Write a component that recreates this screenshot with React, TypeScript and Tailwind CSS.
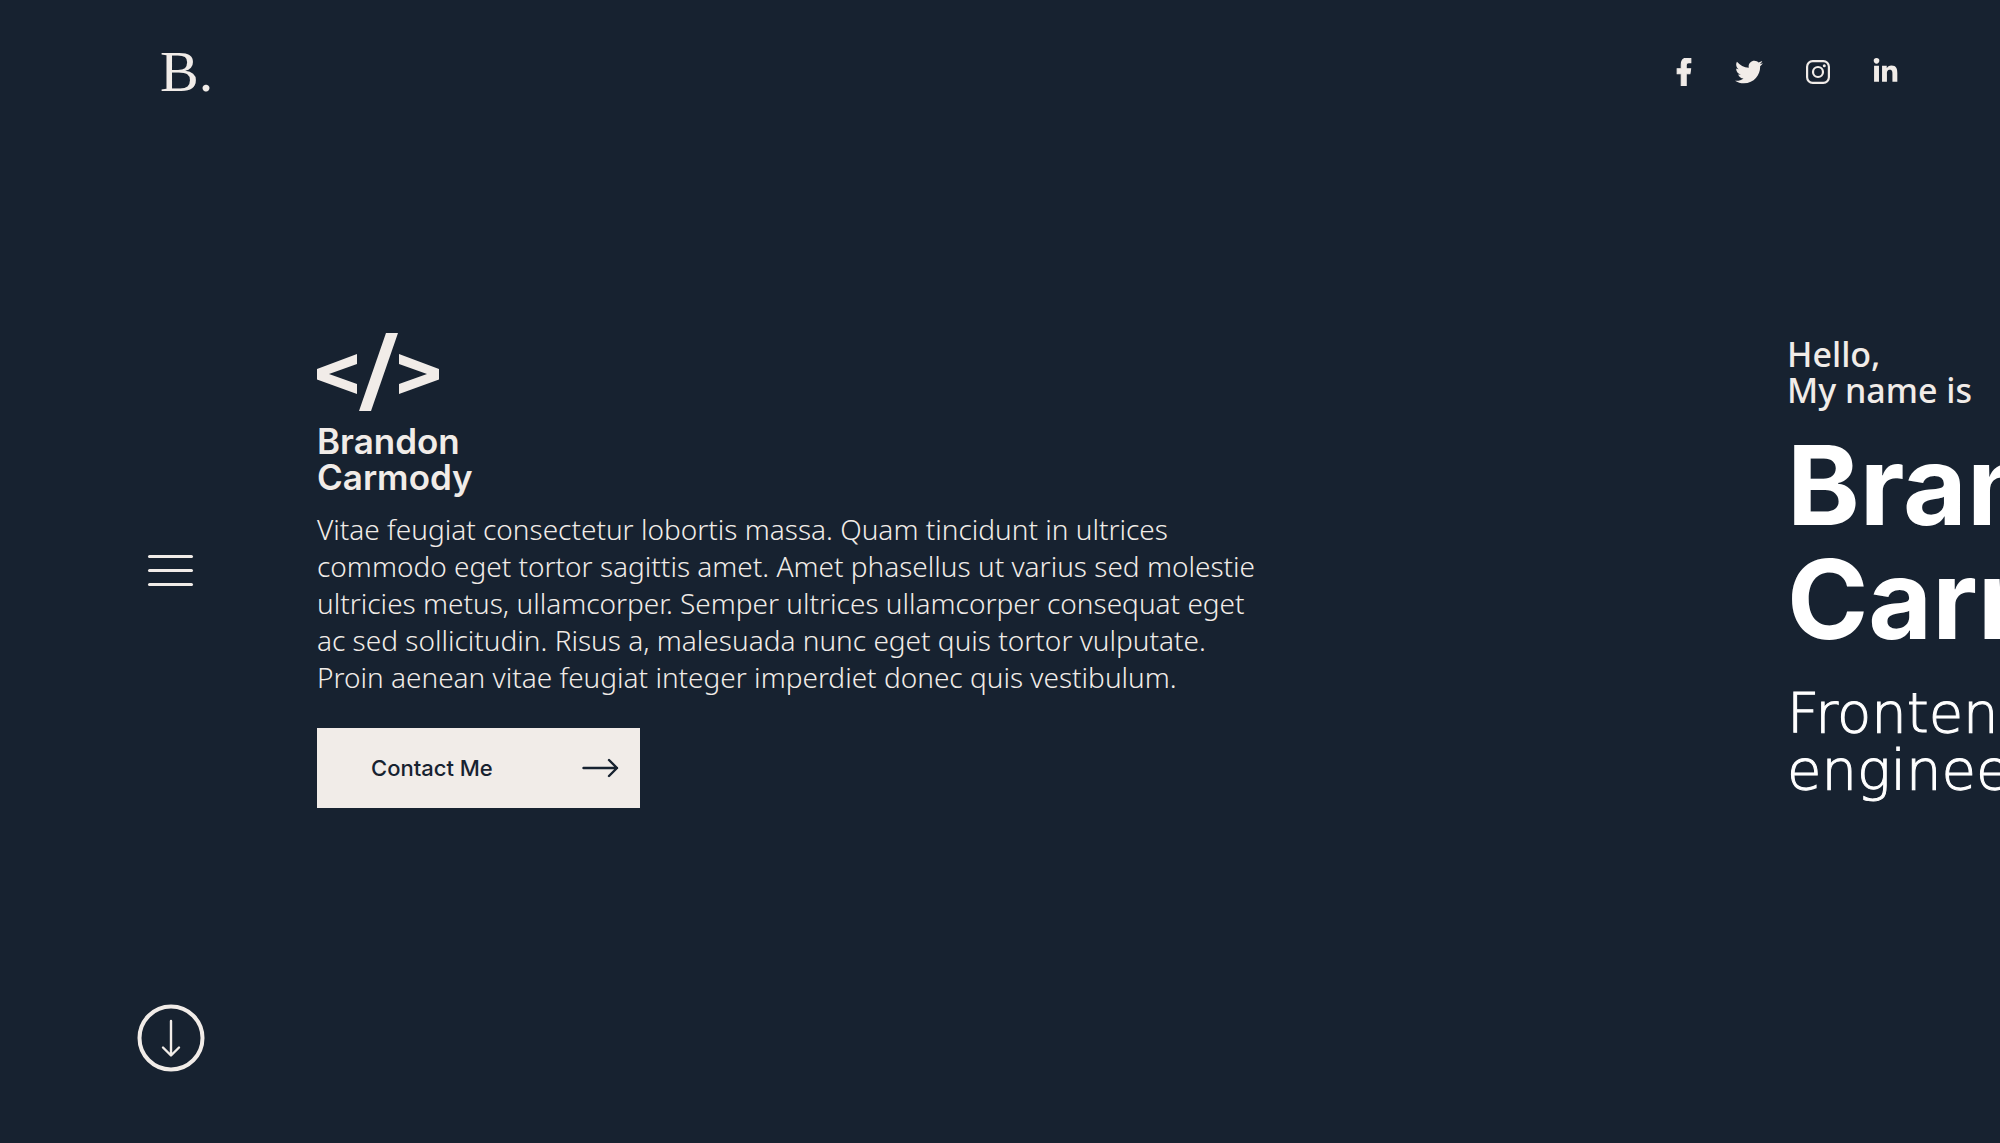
import React from "react";
import { FaFacebookF, FaTwitter, FaLinkedinIn } from "react-icons/fa";

const bio = [
  "Vitae feugiat consectetur lobortis massa. Quam tincidunt in ultrices",
  "commodo eget tortor sagittis amet. Amet phasellus ut varius sed molestie",
  "ultricies metus, ullamcorper. Semper ultrices ullamcorper consequat eget",
  "ac sed sollicitudin. Risus a, malesuada nunc eget quis tortor vulputate.",
  "Proin aenean vitae feugiat integer imperdiet donec quis vestibulum.",
];

function InstagramIcon() {
  return (
    <svg width="24" height="24" viewBox="0 0 24 24" fill="none" stroke="currentColor" strokeWidth="2.2" aria-hidden="true">
      <rect x="1.1" y="1.1" width="21.8" height="21.8" rx="5.6" />
      <circle cx="12" cy="12" r="5" />
      <circle cx="18.3" cy="5.8" r="1.5" fill="currentColor" stroke="none" />
    </svg>
  );
}

function CodeMark() {
  return (
    <svg width="122" height="78" viewBox="0 0 122 78" fill="currentColor" aria-hidden="true">
      <path d="M40 21V31L12 41L40 51V61L0 46.500V36Z" />
      <path d="M69 0H81L54 78H42Z" />
      <path d="M82 21L122 36V46.500L82 61V51L110 41L82 31Z" />
    </svg>
  );
}

function Social() {
  return (
    <nav aria-label="Social" className="flex items-center">
      <a href="#facebook" aria-label="Facebook" className="mr-[43px]"><FaFacebookF className="h-7 w-4" preserveAspectRatio="none" stroke="currentColor" strokeWidth="20" /></a>
      <a href="#twitter" aria-label="Twitter" className="mr-[43px]"><FaTwitter size={28} /></a>
      <a href="#instagram" aria-label="Instagram" className="mr-[42px]"><InstagramIcon /></a>
      <a href="#linkedin" aria-label="LinkedIn"><FaLinkedinIn size={27} /></a>
    </nav>
  );
}

export default function App() {
  return (
    <div className="flex min-h-screen flex-col overflow-hidden bg-[#172230] font-['Inter',sans-serif] text-[#f1ece8]">
      <header className="flex h-[143px] items-center justify-between pr-[101px] pl-40">
        <a href="#home" className="font-['Liberation_Serif',serif] text-[58px] leading-none">B.</a>
        <Social />
      </header>

      <main className="flex flex-1 items-center pb-[6px]">
        <button type="button" aria-label="Open menu" className="ml-[148px] flex w-[45px] shrink-0 flex-col gap-[11px]">
          <span className="h-[3px] w-full rounded-full bg-current" />
          <span className="h-[3px] w-full rounded-full bg-current" />
          <span className="h-[3px] w-full rounded-full bg-current" />
        </button>

        <section className="ml-[124px] flex-1">
          <CodeMark />
          <h2 className="mt-3 text-[35px] leading-9 font-semibold">Brandon<br />Carmody</h2>
          <p className="mt-4 font-['Noto_Sans',sans-serif] text-[28px] leading-[37px] font-light whitespace-nowrap">
            {bio.map((line) => (
              <span key={line} className="block">{line}</span>
            ))}
          </p>
          <button type="button" className="mt-8 flex h-20 w-[323px] items-center justify-between bg-[#f1ece8] pr-[21px] pl-[54px] text-[22px] font-medium text-[#172230]">
            Contact Me
            <svg width="37" height="20" viewBox="0 0 37 20" fill="none" stroke="currentColor" strokeWidth="2.400" strokeLinecap="round" strokeLinejoin="round" aria-hidden="true">
              <path d="M1.500 10H35M27 2L35 10L27 18" />
            </svg>
          </button>
        </section>

        <section className="w-[213px] shrink-0 pb-2 whitespace-nowrap">
          <p className="font-['Noto_Sans',sans-serif] text-[34px] leading-9 font-medium">Hello,<br />My name is</p>
          <h1 className="mt-5 text-[110px] leading-[114px] font-bold text-white">Brandon<br />Carmody</h1>
          <p className="mt-7 font-['DejaVu_Sans',sans-serif] text-[56px] leading-[57px] font-extralight text-white [-webkit-text-stroke:1px_white]">Frontend<br />engineer</p>
        </section>
      </main>

      <footer className="flex h-[139px] items-start pl-[137px]">
        <a href="#next" aria-label="Scroll down">
          <svg width="68" height="68" viewBox="0 0 68 68" fill="none" stroke="currentColor" strokeLinecap="round" strokeLinejoin="round" aria-hidden="true">
            <circle cx="34" cy="34" r="31.500" strokeWidth="4" />
            <path d="M34 17V51M26 43.500L34 51.500L42 43.500" strokeWidth="2.400" />
          </svg>
        </a>
      </footer>
    </div>
  );
}
